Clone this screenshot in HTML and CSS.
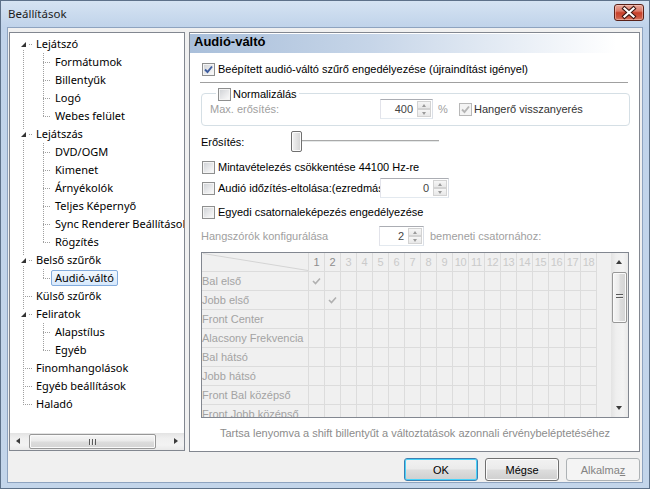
FILE: index.html
```html
<!DOCTYPE html>
<html>
<head>
<meta charset="utf-8">
<title>Beállítások</title>
<link rel="stylesheet" href="styles.css">
</head>
<body>
<div class="window">
  <div class="titlebar">
    <span class="title">Beállítások</span>
    <span class="close"><svg width="28" height="15" viewBox="0 0 28 15"><path d="M9.5 3.5 L18.5 11.5 M18.5 3.5 L9.5 11.5" stroke="#3a1510" stroke-width="4.2" stroke-linecap="square"/><path d="M9.5 3.5 L18.5 11.5 M18.5 3.5 L9.5 11.5" stroke="#fff" stroke-width="2.2" stroke-linecap="square"/></svg></span>
  </div>
  <div class="client">
    <div class="main">
      <div class="tree">
        <div class="tree-body">
          <ul class="lvl0">
            <li>
              <div class="row"><span class="tw"><i></i></span><span class="lbl">Lejátszó</span></div>
              <ul class="lvl1">
                <li><div class="row"><span class="lbl">Formátumok</span></div></li>
                <li><div class="row"><span class="lbl">Billentyűk</span></div></li>
                <li><div class="row"><span class="lbl">Logó</span></div></li>
                <li><div class="row"><span class="lbl">Webes felület</span></div></li>
              </ul>
            </li>
            <li>
              <div class="row"><span class="tw"><i></i></span><span class="lbl">Lejátszás</span></div>
              <ul class="lvl1">
                <li><div class="row"><span class="lbl">DVD/OGM</span></div></li>
                <li><div class="row"><span class="lbl">Kimenet</span></div></li>
                <li><div class="row"><span class="lbl">Árnyékolók</span></div></li>
                <li><div class="row"><span class="lbl">Teljes Képernyő</span></div></li>
                <li><div class="row"><span class="lbl">Sync Renderer Beállítások</span></div></li>
                <li><div class="row"><span class="lbl">Rögzítés</span></div></li>
              </ul>
            </li>
            <li>
              <div class="row"><span class="tw"><i></i></span><span class="lbl">Belső szűrők</span></div>
              <ul class="lvl1">
                <li><div class="row"><span class="lbl sel">Audió-váltó</span></div></li>
              </ul>
            </li>
            <li><div class="row"><span class="lbl">Külső szűrők</span></div></li>
            <li>
              <div class="row"><span class="tw"><i></i></span><span class="lbl">Feliratok</span></div>
              <ul class="lvl1">
                <li><div class="row"><span class="lbl">Alapstílus</span></div></li>
                <li><div class="row"><span class="lbl">Egyéb</span></div></li>
              </ul>
            </li>
            <li><div class="row"><span class="lbl">Finomhangolások</span></div></li>
            <li><div class="row"><span class="lbl">Egyéb beállítások</span></div></li>
            <li><div class="row"><span class="lbl">Haladó</span></div></li>
          </ul>
        </div>
        <div class="hscroll">
          <span class="harrow left"></span>
          <span class="hthumb"><span class="hgrip"></span></span>
          <span class="harrow right"></span>
        </div>
      </div>

      <div class="panel">
        <div class="phead">Audió-váltó</div>
        <div class="pbody">
          <div class="chk r1"><span class="cb on"><svg viewBox="0 0 11 11"><path d="M2 5.5 L4.5 8 L9 2.5" /></svg></span><span>Beépített audió-váltó szűrő engedélyezése (újraindítást igényel)</span></div>
          <div class="sep"></div>
          <div class="group">
            <div class="legend chk"><span class="cb"></span><span>Normalizálás</span></div>
            <div class="grow-in">
              <span class="glab dis">Max. erősítés:</span>
              <span class="spin s400"><span class="val">400</span><span class="arrows"><i class="up"></i><i class="dn"></i></span></span>
              <span class="pct dis">%</span>
              <span class="chk"><span class="cb on dis-cb"><svg viewBox="0 0 11 11"><path d="M2 5.5 L4.5 8 L9 2.5" /></svg></span><span>Hangerő visszanyerés</span></span>
            </div>
          </div>
          <div class="slrow">
            <span class="sllab">Erősítés:</span>
            <span class="slider"><span class="track"></span><span class="thumb"></span></span>
          </div>
          <div class="chk r-mint"><span class="cb"></span><span>Mintavételezés csökkentése 44100 Hz-re</span></div>
          <div class="r-ido">
            <span class="chk idolab"><span class="cb"></span><span class="clip">Audió időzítés-eltolása:(ezredmásodperc)</span></span>
            <span class="spin s0"><span class="val">0</span><span class="arrows"><i class="up"></i><i class="dn"></i></span></span>
          </div>
          <div class="chk r-egy"><span class="cb"></span><span>Egyedi csatornaleképezés engedélyezése</span></div>
          <div class="r-hang">
            <span class="hanglab dis">Hangszórók konfigurálása</span>
            <span class="spin s2"><span class="val">2</span><span class="arrows"><i class="up"></i><i class="dn"></i></span></span>
            <span class="bem dis">bemeneti csatornához:</span>
          </div>
          <div class="grid">
            <div class="gbody">
              <div class="grw ghead">
                <span class="glbl"><svg width="106" height="18"><line x1="1" y1="0.5" x2="106" y2="17.5" stroke="#d4d4d4" stroke-width="1"/></svg></span>
                <span class="gcells"><i class="n1">1</i><i class="n1">2</i><i>3</i><i>4</i><i>5</i><i>6</i><i>7</i><i>8</i><i>9</i><i>10</i><i>11</i><i>12</i><i>13</i><i>14</i><i>15</i><i>16</i><i>17</i><i>18</i></span>
              </div>
              <div class="grw"><span class="glbl">Bal első</span><span class="gcells"><i><svg class="gck" viewBox="0 0 9 8"><path d="M1 4 L3.5 6.5 L8 1.5"/></svg></i></span></div>
              <div class="grw"><span class="glbl">Jobb első</span><span class="gcells"><i></i><i><svg class="gck" viewBox="0 0 9 8"><path d="M1 4 L3.5 6.5 L8 1.5"/></svg></i></span></div>
              <div class="grw"><span class="glbl">Front Center</span><span class="gcells"></span></div>
              <div class="grw"><span class="glbl">Alacsony Frekvencia</span><span class="gcells"></span></div>
              <div class="grw"><span class="glbl">Bal hátsó</span><span class="gcells"></span></div>
              <div class="grw"><span class="glbl">Jobb hátsó</span><span class="gcells"></span></div>
              <div class="grw"><span class="glbl">Front Bal középső</span><span class="gcells"></span></div>
              <div class="grw"><span class="glbl">Front Jobb középső</span><span class="gcells"></span></div>
            </div>
            <div class="vscroll">
              <span class="varrow up"></span>
              <span class="vthumb"><span class="vgrip"></span></span>
              <span class="vfill"></span>
              <span class="varrow dn"></span>
            </div>
          </div>
          <div class="caption">Tartsa lenyomva a shift billentyűt a változtatások azonnali érvénybeléptetéséhez</div>
        </div>
      </div>
    </div>
    <div class="buttons">
      <span class="btn def">OK</span>
      <span class="btn">Mégse</span>
      <span class="btn disabled">Alkalma<u>z</u></span>
    </div>
  </div>
</div>
</body>
</html>
```

FILE: styles.css
```css
html, body {
  margin: 0;
  padding: 0;
  background: #c3d5ea;
}

.window {
  width: 650px;
  height: 489px;
  box-sizing: border-box;
  border: 1px solid #5d7189;
  background: linear-gradient(#d5e3f2 0, #c0d3ea 26px, #c3d5ea 100%);
  display: flex;
  flex-direction: column;
  overflow: hidden;
}

.titlebar {
  height: 26px;
  flex: none;
  display: flex;
  align-items: center;
  justify-content: space-between;
  padding: 0 5px 0 7px;
}

.title {
  font: 11.5px "Noto Sans", sans-serif;
  color: #1b1b1b;
  margin-top: -1px;
}

.close {
  width: 28px;
  height: 15px;
  margin-top: -4px;
  border: 1px solid #5a2118;
  border-radius: 3px;
  background: linear-gradient(#e9a89a 0%, #dc7b6a 40%, #c8402a 52%, #cb5540 80%, #d87a63 100%);
  box-shadow: inset 0 0 0 1px rgba(255, 220, 210, 0.45);
  display: flex;
}

.client {
  flex: 1;
  margin: 0 6px 5px 6px;
  border: 1px solid #8ea3bf;
  background: #f0f0f0;
  padding: 4px 0 0 1px;
  display: flex;
  flex-direction: column;
}

.main {
  display: flex;
  gap: 4px;
  align-items: flex-start;
}

/* ---------- tree ---------- */
.tree {
  width: 176px;
  height: 419px;
  box-sizing: border-box;
  border: 1px solid #828790;
  background: #fff;
  display: flex;
  flex-direction: column;
  font: 11px "Noto Sans", sans-serif;
  color: #000;
}

.tree-body {
  flex: 1;
  padding-top: 2px;
  overflow: hidden;
  white-space: nowrap;
}

.tree ul {
  list-style: none;
  margin: 0;
  padding: 0;
  position: relative;
}

.tree ul::before {
  content: "";
  position: absolute;
  width: 1px;
  background: repeating-linear-gradient(to bottom, #a0a0a0 0 1px, transparent 1px 2px);
}

.lvl0::before { left: 13px; top: 9px; bottom: 9px; }
.lvl1::before { left: 33px; top: 0; bottom: 9px; }

.row {
  height: 18px;
  display: flex;
  align-items: center;
  position: relative;
}

.row::before {
  content: "";
  position: absolute;
  top: 9px;
  height: 1px;
  background: repeating-linear-gradient(to right, #a0a0a0 0 1px, transparent 1px 2px);
}

.lvl0 > li > .row { padding-left: 22px; }
.lvl0 > li > .row::before { left: 13px; width: 9px; }
.lvl1 > li > .row { padding-left: 41px; }
.lvl1 > li > .row::before { left: 33px; width: 8px; }

.tw {
  position: absolute;
  left: 9px;
  top: 4px;
  width: 9px;
  height: 10px;
  background: #fff;
  z-index: 1;
}

.tw i {
  position: absolute;
  left: 2px;
  top: 3px;
  width: 0;
  height: 0;
  border-right: 5px solid #333;
  border-top: 5px solid transparent;
}

.lbl {
  display: inline-block;
  height: 16px;
  line-height: 14px;
  padding: 0 3px;
  border: 1px solid transparent;
  border-radius: 2px;
  box-sizing: border-box;
  position: relative;
  z-index: 1;
}

.lbl.sel {
  border-color: #84acdd;
  background: linear-gradient(#f2f8fe, #d6e8fc);
}

.hscroll {
  height: 17px;
  flex: none;
  display: flex;
  align-items: center;
  background: linear-gradient(#e3e3e3, #efefef 30%, #f3f3f3 70%, #e9e9e9);
}

.harrow {
  width: 17px;
  height: 17px;
  position: relative;
  flex: none;
}

.harrow::after {
  content: "";
  position: absolute;
  top: 5px;
  width: 0;
  height: 0;
  border-top: 3.5px solid transparent;
  border-bottom: 3.5px solid transparent;
}

.harrow.left::after { left: 6px; border-right: 4px solid #3c3c3c; }
.harrow.right::after { left: 7px; border-left: 4px solid #3c3c3c; }

.hthumb {
  width: 127px;
  height: 15px;
  margin-left: 2px;
  box-sizing: border-box;
  border: 1px solid #979797;
  border-radius: 2px;
  background: linear-gradient(#f6f6f6, #ebebeb 45%, #dcdcdc 55%, #d4d4d4);
  box-shadow: inset 0 0 0 1px #fafafa;
  display: flex;
  align-items: center;
  justify-content: center;
}

.hscroll .harrow.right { margin-left: auto; }

.hgrip {
  width: 7px;
  height: 6px;
  background: repeating-linear-gradient(to right, #5a5a5a 0 1px, #eee 1px 2px, transparent 2px 3px);
}

/* ---------- panel ---------- */
.panel {
  width: 451px;
  height: 420px;
  box-sizing: border-box;
  border: 1px solid #828790;
  background: #fff;
  display: flex;
  flex-direction: column;
  font: 11px "Liberation Sans", Arial, sans-serif;
  color: #000;
}

.phead {
  margin-top: 1px;
  height: 19px;
  line-height: 19px;
  padding-left: 4px;
  font: bold 13px "Liberation Sans", Arial, sans-serif;
  color: #000;
  background: linear-gradient(to right, #a9bfda 0%, #c6d5e8 40%, #ffffff 95%);
}

.pbody {
  padding: 0 10px 0 11px;
  display: flex;
  flex-direction: column;
}

.chk {
  display: flex;
  align-items: center;
  gap: 3px;
  height: 16px;
  white-space: nowrap;
}

.cb {
  width: 13px;
  height: 13px;
  flex: none;
  box-sizing: border-box;
  border: 1px solid #8e8f8f;
  background: linear-gradient(135deg, #cdd0d4 0%, #e6e7e9 50%, #fdfdfd 100%);
  box-shadow: inset 0 0 0 1px #f4f4f4;
  position: relative;
}

.cb svg {
  position: absolute;
  left: 0;
  top: 0;
  width: 11px;
  height: 11px;
}

.cb svg path {
  fill: none;
  stroke: #3d5c9e;
  stroke-width: 1.9;
}

.cb.dis-cb {
  border-color: #b8b8b8;
  background: #f4f4f4;
}

.cb.dis-cb svg path { stroke: #b5b5b5; }

.dis { color: #a0a0a0; }

.r1 { margin-top: 8px; margin-left: 1px; }

.sep {
  height: 1px;
  background: #a0a0a0;
  margin: 5px 0 0 -1px;
  width: 428px;
}

.group {
  margin-top: 10px;
  height: 33px;
  width: 429px;
  box-sizing: border-box;
  border: 1px solid #d5dfe5;
  border-radius: 4px;
  position: relative;
}

.legend {
  position: absolute;
  left: 14px;
  top: -8px;
  background: #fff;
  padding: 0 2px;
  gap: 2px;
}

.grow-in {
  display: flex;
  align-items: center;
  height: 20px;
  margin-top: 5px;
  padding-left: 8px;
}

.glab { width: 170px; flex: none; }

.spin {
  display: flex;
  height: 20px;
  box-sizing: border-box;
  border: 1px solid;
  border-color: #abadb3 #dbdfe6 #e3e9ef #e2e3ea;
  background: #fff;
  flex: none;
}

.spin .val {
  flex: 1;
  text-align: right;
  padding-right: 4px;
  line-height: 18px;
  color: #444;
}

.spin .arrows {
  width: 14px;
  display: flex;
  flex-direction: column;
  padding: 1px 1px 1px 0;
  gap: 0;
}

.spin .arrows i {
  flex: 1;
  position: relative;
  border: 1px solid #d3d3d3;
  background: linear-gradient(#f6f6f6, #e8e8e8);
}

.spin .arrows i::after {
  content: "";
  position: absolute;
  left: 4px;
  width: 0;
  height: 0;
  border-left: 2.5px solid transparent;
  border-right: 2.5px solid transparent;
}

.spin .arrows i.up::after { top: 2px; border-bottom: 3px solid #9a9a9a; }
.spin .arrows i.dn::after { top: 2px; border-top: 3px solid #9a9a9a; }

.s400 { width: 53px; }
.s0 { width: 69px; }
.s2 { width: 45px; }

.pct { margin-left: 5px; width: 15px; }
.grow-in .chk { margin-left: 6px; gap: 2px; color: #333; }

.slrow {
  display: flex;
  align-items: center;
  height: 21px;
  margin-top: 5px;
}

.sllab { width: 90px; flex: none; }

.slider {
  width: 148px;
  height: 21px;
  position: relative;
}

.track {
  position: absolute;
  left: 0;
  right: 0;
  top: 9px;
  height: 1px;
  background: #a9a9a9;
  border-bottom: 1px solid #e5e8e8;
}

.thumb {
  position: absolute;
  left: 0;
  top: 0;
  width: 11px;
  height: 21px;
  box-sizing: border-box;
  border: 1px solid #707070;
  border-radius: 2px;
  background: linear-gradient(to right, #f3f3f3, #e3e3e3 50%, #d3d3d3);
  box-shadow: inset 0 0 0 1px #fbfbfb;
}

.r-mint { margin-top: 7px; margin-left: 1px; }

.r-ido {
  display: flex;
  align-items: center;
  height: 20px;
  margin-top: 3px;
}

.idolab {
  width: 178px;
  flex: none;
  overflow: hidden;
  margin-left: 1px;
}

.idolab .clip { overflow: hidden; }

.r-egy { margin-top: 6px; margin-left: 1px; }

.r-hang {
  display: flex;
  align-items: center;
  height: 20px;
  margin-top: 6px;
}

.hanglab { width: 178px; flex: none; }
.bem { margin-left: 6px; }

.grid {
  margin-top: 6px;
  width: 428px;
  height: 166px;
  box-sizing: border-box;
  border: 1px solid #828790;
  background: #f0f0f0;
  display: flex;
}

.gbody {
  flex: 1;
  overflow: hidden;
  color: #a3a3a3;
}

.grw {
  display: flex;
  width: 395px;
  height: 19px;
  box-sizing: border-box;
  border-bottom: 1px solid #dcdcdc;
}

.glbl {
  width: 107px;
  flex: none;
  box-sizing: border-box;
  border-right: 1px solid #dcdcdc;
  line-height: 18px;
  white-space: nowrap;
  overflow: hidden;
  display: flex;
}

.gcells {
  width: 288px;
  flex: none;
  display: flex;
  background: repeating-linear-gradient(to right, transparent 0 15px, #dcdcdc 15px 16px);
}

.gcells i {
  width: 16px;
  flex: none;
  display: flex;
  align-items: center;
  justify-content: center;
  font-style: normal;
  line-height: 18px;
  padding-right: 1px;
  box-sizing: border-box;
  color: #cacaca;
  letter-spacing: -0.3px;
}

.gcells i.n1 { color: #8d8d8d; }

.gck {
  width: 9px;
  height: 8px;
}

.gck path {
  fill: none;
  stroke: #b0b0b0;
  stroke-width: 1.6;
}

.vscroll {
  width: 17px;
  flex: none;
  display: flex;
  flex-direction: column;
  align-items: center;
  background: linear-gradient(to right, #e3e3e3, #efefef 30%, #f3f3f3 70%, #e9e9e9);
}

.varrow {
  width: 17px;
  height: 17px;
  flex: none;
  position: relative;
}

.varrow::after {
  content: "";
  position: absolute;
  left: 5px;
  width: 0;
  height: 0;
  border-left: 3.5px solid transparent;
  border-right: 3.5px solid transparent;
}

.varrow.up::after { top: 7px; border-bottom: 4px solid #3c3c3c; }
.varrow.dn::after { top: 6px; border-top: 4px solid #3c3c3c; }

.vthumb {
  width: 15px;
  height: 51px;
  margin-top: 2px;
  box-sizing: border-box;
  border: 1px solid #979797;
  border-radius: 2px;
  background: linear-gradient(to right, #f6f6f6, #ebebeb 45%, #dcdcdc 55%, #d4d4d4);
  box-shadow: inset 0 0 0 1px #fafafa;
  display: flex;
  align-items: center;
  justify-content: center;
}

.vgrip {
  width: 7px;
  height: 6px;
  background: repeating-linear-gradient(to bottom, #5a5a5a 0 1px, #eee 1px 2px, transparent 2px 3px);
  margin-top: -1px;
}

.vfill { flex: 1; }

.caption {
  margin-top: 8px;
  height: 14px;
  line-height: 14px;
  text-align: center;
  color: #8c8c8c;
  white-space: nowrap;
}

/* ---------- buttons ---------- */
.buttons {
  display: flex;
  justify-content: flex-end;
  gap: 7px;
  margin-top: 6px;
  padding-right: 2px;
}

.btn {
  width: 74px;
  height: 23px;
  box-sizing: border-box;
  border: 1px solid #707070;
  border-radius: 3px;
  background: linear-gradient(#f2f2f2 0%, #ebebeb 48%, #dddddd 52%, #cfcfcf 100%);
  box-shadow: inset 0 0 0 1px #fcfcfc;
  font: 11px "Liberation Sans", Arial, sans-serif;
  color: #000;
  display: flex;
  align-items: center;
  justify-content: center;
}

.btn.def {
  border-color: #3c7fb1;
  box-shadow: inset 0 0 0 1px #48d2f9;
  background: linear-gradient(#eaf6fd 0%, #d9f0fc 48%, #bee6fd 52%, #a7d9f5 100%);
  background: linear-gradient(#f2f2f2 0%, #ebebeb 48%, #dddddd 52%, #cfcfcf 100%);
}

.btn.disabled {
  border-color: #adb2b5;
  background: #f4f4f4;
  box-shadow: none;
  color: #838383;
}

.btn u { text-decoration: underline; }
```
